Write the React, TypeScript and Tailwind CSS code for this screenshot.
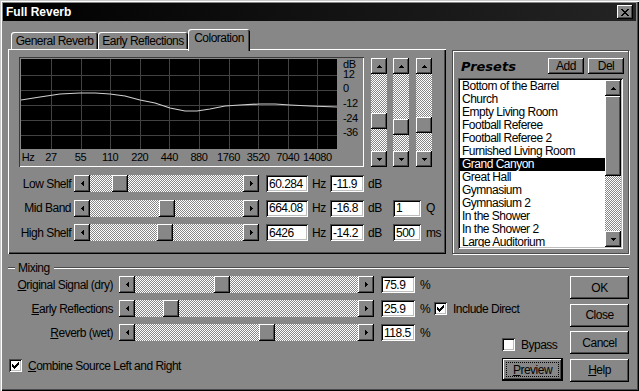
import React from 'react';

const RAISED = 'bg-[#878787] shadow-[inset_-1px_-1px_#000,inset_1px_1px_#fff,inset_-2px_-2px_#4a4a4a]';
const FIELD = 'bg-white shadow-[inset_1px_1px_#4a4a4a,inset_-1px_-1px_#fff,inset_2px_2px_#000,inset_-2px_-2px_#bdbdbd]';
const TRACK = 'bg-[conic-gradient(#fff_25%,#878787_0_50%,#fff_0_75%,#878787_0)] bg-size-[2px_2px]';

type Dir = 'up' | 'down' | 'left' | 'right';

const triPaths: Record<Dir, { w: number; h: number; d: string }> = {
  up: { w: 5, h: 3, d: 'M2 0h1v1h-1z M1 1h3v1h-3z M0 2h5v1h-5z' },
  down: { w: 5, h: 3, d: 'M0 0h5v1h-5z M1 1h3v1h-3z M2 2h1v1h-1z' },
  left: { w: 3, h: 5, d: 'M0 2h1v1h-1z M1 1h1v3h-1z M2 0h1v5h-1z' },
  right: { w: 3, h: 5, d: 'M0 0h1v5h-1z M1 1h1v3h-1z M2 2h1v1h-1z' },
};

function Tri({ dir }: { dir: Dir }) {
  const t = triPaths[dir];
  return (
    <svg width={t.w} height={t.h} shapeRendering="crispEdges">
      <path d={t.d} fill="#000" />
    </svg>
  );
}

function ArrowBtn({ dir }: { dir: Dir }) {
  return (
    <div className={`w-[16px] h-[16px] shrink-0 flex items-center justify-center ${RAISED}`}>
      <Tri dir={dir} />
    </div>
  );
}

function HScroll({ w, thumb }: { w: string; thumb: number }) {
  return (
    <div className={`flex h-[17px] shrink-0 ${w}`}>
      <div className={`w-[16px] h-full flex items-center justify-center ${RAISED}`}>
        <Tri dir="left" />
      </div>
      <div className={`flex-1 flex ${TRACK}`}>
        <div className={`w-[16px] h-full ${RAISED}`} style={{ marginLeft: thumb }} />
      </div>
      <div className={`w-[16px] h-full flex items-center justify-center ${RAISED}`}>
        <Tri dir="right" />
      </div>
    </div>
  );
}

function VScroll({ h, thumb, thumbH }: { h: string; thumb: number; thumbH: string }) {
  return (
    <div className={`w-[16px] flex flex-col shrink-0 ${h}`}>
      <ArrowBtn dir="up" />
      <div className={`flex-1 flex flex-col ${TRACK}`}>
        <div className={`w-full ${thumbH} ${RAISED}`} style={{ marginTop: thumb }} />
      </div>
      <ArrowBtn dir="down" />
    </div>
  );
}

function Field({ w, children }: { w: string; children: React.ReactNode }) {
  return <div className={`h-[17px] shrink-0 flex items-center pl-[3px] ${w} ${FIELD}`}>{children}</div>;
}

function Check({ on }: { on?: boolean }) {
  return (
    <div className={`w-[13px] h-[13px] shrink-0 ${FIELD}`}>
      {on && (
        <svg width="13" height="13" shapeRendering="crispEdges">
          <path
            d="M9 3h1v1h-1z M8 4h2v1h-2z M3 5h1v1h-1z M7 5h3v1h-3z M3 6h2v1h-2z M6 6h3v1h-3z M3 7h5v1h-5z M4 8h3v1h-3z M5 9h1v1h-1z"
            fill="#000"
          />
        </svg>
      )}
    </div>
  );
}

function Button({ children }: { children: React.ReactNode }) {
  return <div className={`h-[23px] w-full flex items-center justify-center ${RAISED}`}>{children}</div>;
}

const hzLabels = ['27', '55', '110', '220', '440', '880', '1760', '3520', '7040', '14080'];
const curve =
  '0,41 19,38 39,35 59,34 74,34 89,35 104,37 119,41 134,44 149,49 164,52 176,52 189,50 204,47 219,46 239,45 254,45 269,46 289,47 316,48';

function Graph() {
  const vLines = [30, 60, 89, 119, 148, 178, 208, 237, 267, 296];
  const hLines = [16, 31, 46, 61, 76];
  return (
    <div className="w-[345px] h-[110px] shrink-0 pt-[2px] pl-[2px] flex flex-col shadow-[inset_1px_1px_#3a3a3a,inset_-1px_-1px_#fff]">
      <div className="flex">
        <svg width="316" height="90" className="bg-black block" shapeRendering="crispEdges">
          {vLines.map((x) => (
            <line key={x} x1={x + 0.5} y1={0} x2={x + 0.5} y2={90} stroke="#424242" />
          ))}
          {hLines.map((y) => (
            <line key={y} x1={0} y1={y + 0.5} x2={316} y2={y + 0.5} stroke="#424242" />
          ))}
          <polyline points={curve} fill="none" stroke="#cfcfcf" strokeWidth="1.2" shapeRendering="auto" />
        </svg>
        <div className="flex flex-col pl-[6px] pt-[1px] text-[11px] tracking-[-0.4px]">
          <div className="h-[9px] flex items-center">dB</div>
          <div className="h-[10px] flex items-center">12</div>
          <div className="h-[14.6px] mt-[2.7px] flex items-center">0</div>
          <div className="h-[14.6px] flex items-center">-12</div>
          <div className="h-[14.6px] flex items-center">-24</div>
          <div className="h-[14.6px] flex items-center">-36</div>
        </div>
      </div>
      <div className="h-[16px] flex items-center text-[11px] tracking-[-0.4px]">
        <div className="w-[14px] text-center">Hz</div>
        <div className="w-[1.2px]" />
        {hzLabels.map((l) => (
          <div key={l} className="w-[29.6px] text-center">
            {l}
          </div>
        ))}
      </div>
    </div>
  );
}

function BandRow({ label, thumb, hz, db, extra, unit }: { label: string; thumb: number; hz: string; db: string; extra?: string; unit?: string }) {
  return (
    <div className="flex items-center h-[17px]">
      <div className="w-[64px] text-right pr-[1px] whitespace-nowrap">{label}</div>
      <div className="ml-[2px]">
        <HScroll w="w-[185px]" thumb={thumb} />
      </div>
      <div className="ml-[7px]">
        <Field w="w-[42px]">{hz}</Field>
      </div>
      <span className="w-[22px] pl-[4px]">Hz</span>
      <Field w="w-[34px]">{db}</Field>
      <span className="w-[29px] pl-[4px]">dB</span>
      {extra && <Field w="w-[28px]">{extra}</Field>}
      {unit && <span className="pl-[5px]">{unit}</span>}
    </div>
  );
}

function TabControl() {
  const tab = 'rounded-t-[3px] shadow-[inset_1px_1px_#fff,inset_-1px_0_#000,inset_-2px_0_#4a4a4a] flex items-center justify-center whitespace-nowrap';
  return (
    <div className="w-[438px] shrink-0 flex flex-col">
      <div className="h-[20px] flex items-end pl-[3px]">
        <div className={`w-[87px] h-[17px] ${tab}`}>General Reverb</div>
        <div className={`w-[90px] h-[17px] ${tab}`}>Early Reflections</div>
        <div className={`relative z-10 w-[62px] h-[22px] -mb-[2px] pb-[4px] bg-[#878787] ${tab}`}>Coloration</div>
      </div>
      <div className="h-[205px] flex flex-col shadow-[inset_1px_1px_#fff,inset_-1px_-1px_#000,inset_-2px_-2px_#4a4a4a]">
        <div className="flex items-start pt-[8px] pl-[11px]">
          <Graph />
          <div className="flex mt-[1px] ml-[7px]">
            <VScroll h="h-[109px]" thumb={39} thumbH="h-[16px]" />
            <div className="ml-[6px]">
              <VScroll h="h-[109px]" thumb={45} thumbH="h-[16px]" />
            </div>
            <div className="ml-[7px]">
              <VScroll h="h-[109px]" thumb={43} thumbH="h-[16px]" />
            </div>
          </div>
        </div>
        <div className="flex flex-col gap-[7.5px] mt-[8px]">
          <BandRow label="Low Shelf" thumb={22} hz="60.284" db="-11.9" />
          <BandRow label="Mid Band" thumb={69} hz="664.08" db="-16.8" extra="1" unit="Q" />
          <BandRow label="High Shelf" thumb={67} hz="6426" db="-14.2" extra="500" unit="ms" />
        </div>
      </div>
    </div>
  );
}

const presets = [
  'Bottom of the Barrel',
  'Church',
  'Empty Living Room',
  'Football Referee',
  'Football Referee 2',
  'Furnished Living Room',
  'Grand Canyon',
  'Great Hall',
  'Gymnasium',
  'Gymnasium 2',
  'In the Shower',
  'In the Shower 2',
  'Large Auditorium',
];

function Presets() {
  return (
    <div className="ml-[6px] mt-[21px] w-[177px] h-[204px] shrink-0 border border-[#4a4a4a] shadow-[inset_1px_1px_#fff,1px_1px_#fff] flex flex-col">
      <div className="flex items-center h-[16px] mt-[7px] pl-[8px] pr-[4px]">
        <div className="flex-1 font-['DejaVu_Sans',sans-serif] font-bold italic text-[13px] tracking-normal">Presets</div>
        <div className={`w-[36px] h-[16px] flex items-center justify-center ${RAISED}`}>Add</div>
        <div className={`w-[36px] h-[16px] ml-[4px] flex items-center justify-center ${RAISED}`}>Del</div>
      </div>
      <div className={`w-[165px] h-[171px] ml-[5px] mt-[4px] p-[2px] flex ${FIELD}`}>
        <div className="flex-1 overflow-hidden">
          {presets.map((p) => (
            <div
              key={p}
              className={`h-[13px] leading-[13px] pl-[2px] whitespace-nowrap ${p === 'Grand Canyon' ? 'bg-black text-white' : ''}`}
            >
              {p}
            </div>
          ))}
        </div>
        <VScroll h="h-full" thumb={0} thumbH="h-[80px]" />
      </div>
    </div>
  );
}

function MixRow({ first, rest, thumb, value, children }: { first: string; rest: string; thumb: number; value: string; children?: React.ReactNode }) {
  return (
    <div className="flex items-center h-[17px]">
      <div className="w-[106px] text-right pr-[1px] whitespace-nowrap">
        <u>{first}</u>
        {rest}
      </div>
      <div className="ml-[5px]">
        <HScroll w="w-[255px]" thumb={thumb} />
      </div>
      <div className="ml-[7px]">
        <Field w="w-[34px]">{value}</Field>
      </div>
      <span className="w-[19px] pl-[5px]">%</span>
      {children}
    </div>
  );
}

function Mixing() {
  const etch = 'h-0 border-t border-t-[#4a4a4a] border-b border-b-white';
  return (
    <div className="mt-[7px] pl-[5px] pr-[7px] flex flex-col">
      <div className="flex items-center h-[14px]">
        <div className={`w-[7px] ${etch}`} />
        <span className="ml-[3px] mr-[4px]">Mixing</span>
        <div className={`flex-1 ${etch}`} />
      </div>
      <div className="flex mt-[1px]">
        <div className="flex-1 flex flex-col">
          <div className="flex flex-col gap-[7px]">
            <MixRow first="O" rest="riginal Signal (dry)" thumb={79} value="75.9" />
            <MixRow first="E" rest="arly Reflections" thumb={28} value="25.9">
              <Check on />
              <span className="ml-[6px] whitespace-nowrap">Include Direct</span>
            </MixRow>
            <MixRow first="R" rest="everb (wet)" thumb={124} value="118.5" />
          </div>
          <div className="flex items-end justify-between pr-[7px] -mt-[3px]">
            <div className="flex items-center mb-[9px] ml-[1px]">
              <Check on />
              <span className="ml-[6px] whitespace-nowrap">
                <u>C</u>ombine Source Left and Right
              </span>
            </div>
            <div className="flex flex-col w-[61px]">
              <div className="flex items-center h-[13px]">
                <Check />
                <span className="ml-[6px]">Bypass</span>
              </div>
              <div className="mt-[7px] w-[61px] h-[23px] border border-black flex">
                <div className={`flex-1 flex p-[3px] ${RAISED}`}>
                  <div className="flex-1 border border-dotted border-black flex items-center justify-center">
                    <span>
                      <u>P</u>review
                    </span>
                  </div>
                </div>
              </div>
            </div>
          </div>
        </div>
        <div className="w-[59px] flex flex-col gap-[4.5px]">
          <Button>OK</Button>
          <Button>Close</Button>
          <Button>Cancel</Button>
          <Button>
            <span>
              <u>H</u>elp
            </span>
          </Button>
        </div>
      </div>
    </div>
  );
}

export default function App() {
  return (
    <div className="w-[639px] h-[391px] overflow-hidden bg-[#878787] p-[3px] flex flex-col text-[12px] tracking-[-0.5px] leading-none text-black font-['Liberation_Sans',Arial,sans-serif] shadow-[inset_1px_1px_#c8c8c8,inset_2px_2px_#fff,inset_-1px_-1px_#000,inset_-2px_-2px_#4a4a4a]">
      <div className="h-[18px] shrink-0 flex items-center justify-between px-[3px] bg-[linear-gradient(to_right,#000,#242424)]">
        <span className="font-bold text-[12px] tracking-normal text-white">Full Reverb</span>
        <div className={`w-[16px] h-[14px] flex items-center justify-center ${RAISED}`}>
          <svg width="8" height="7" shapeRendering="crispEdges">
            <path
              d="M0 0h2v1h-2z M6 0h2v1h-2z M1 1h2v1h-2z M5 1h2v1h-2z M2 2h4v1h-4z M3 3h2v1h-2z M2 4h4v1h-4z M1 5h2v1h-2z M5 5h2v1h-2z M0 6h2v1h-2z M6 6h2v1h-2z"
              fill="#000"
            />
          </svg>
        </div>
      </div>
      <div className="flex items-start mt-[8px] pl-[5px]">
        <TabControl />
        <Presets />
      </div>
      <Mixing />
    </div>
  );
}
